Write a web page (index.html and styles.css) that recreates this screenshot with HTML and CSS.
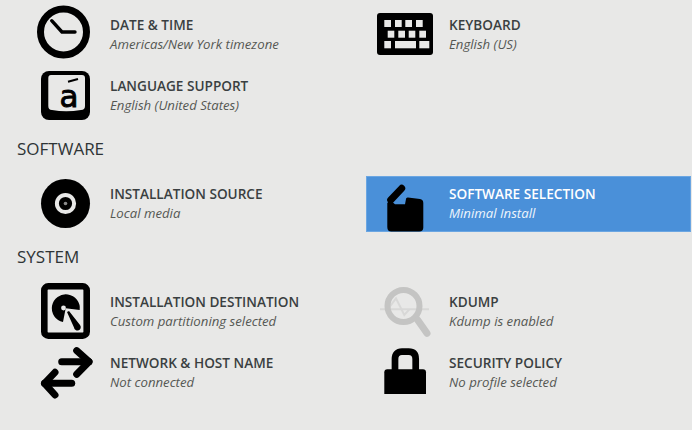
FILE: index.html
```html
<!DOCTYPE html>
<html lang="en">
<head>
    <meta charset="UTF-8">
    <meta name="viewport" content="width=device-width, initial-scale=1.0">
    <title>Installation Summary</title>
    <link rel="stylesheet" href="styles.css">
</head>
<body>
<div class="hub">
    <!-- localization -->
    <div class="spoke-grid">
        <div class="spoke">
            <svg class="spoke-icon" viewBox="0 1 60 60">
                <circle cx="27.5" cy="28" r="23" fill="none" stroke="#000" stroke-width="7"/>
                <path d="M15.7 16.7 26 28H39" fill="none" stroke="#000" stroke-width="3.4" stroke-linecap="round" stroke-linejoin="round"/>
            </svg>
            <div class="spoke-text">
                <div class="spoke-title">DATE &amp; TIME</div>
                <div class="spoke-status">Americas/New York timezone</div>
            </div>
        </div>
        <div class="spoke">
            <svg class="spoke-icon" viewBox="0 1 60 60">
                <rect x="2" y="9" width="56" height="42" rx="3"/>
                <g fill="#e8e8e7">
                    <rect x="9.3" y="16" width="6.7" height="7"/>
                    <rect x="20" y="16" width="6.7" height="7"/>
                    <rect x="30.3" y="16" width="6.7" height="7"/>
                    <rect x="41" y="16" width="6.7" height="7"/>
                    <rect x="12.7" y="26.7" width="6.6" height="7"/>
                    <rect x="23.3" y="26.7" width="6.7" height="7"/>
                    <rect x="33.7" y="26.7" width="6.6" height="7"/>
                    <rect x="44.3" y="26.7" width="6.7" height="7"/>
                    <rect x="9.3" y="37" width="6.7" height="7.3"/>
                    <rect x="20" y="37" width="21" height="7.3"/>
                    <rect x="44.3" y="37" width="10" height="7.3"/>
                </g>
            </svg>
            <div class="spoke-text">
                <div class="spoke-title">KEYBOARD</div>
                <div class="spoke-status">English (US)</div>
            </div>
        </div>
        <div class="spoke">
            <svg class="spoke-icon" viewBox="0 0 60 60">
                <rect x="5" y="5" width="49" height="49" rx="8"/>
                <path d="M15 9H46Q49 9 49 12V40Q49 44 45 44Q30 46.5 16 44Q12.3 44 12.3 40V12Q12.3 9 15 9Z" fill="#e8e8e7"/>
                <path d="M32 15.7 42 13" fill="none" stroke="#000" stroke-width="2.2"/>
                <text class="key-letter" x="23.5" y="41">a</text>
            </svg>
            <div class="spoke-text">
                <div class="spoke-title">LANGUAGE SUPPORT</div>
                <div class="spoke-status">English (United States)</div>
            </div>
        </div>
    </div>

    <h2 class="section-title">SOFTWARE</h2>
    <div class="spoke-grid">
        <div class="spoke">
            <svg class="spoke-icon" viewBox="0 0 60 60">
                <circle cx="29.5" cy="29.5" r="24.5"/>
                <circle cx="29.5" cy="29.5" r="8.6" fill="none" stroke="#e8e8e7" stroke-width="4"/>
                <circle cx="29.5" cy="29.5" r="1.8" fill="#8a8a8a"/>
            </svg>
            <div class="spoke-text">
                <div class="spoke-title">INSTALLATION SOURCE</div>
                <div class="spoke-status">Local media</div>
            </div>
        </div>
        <div class="spoke selected">
            <svg class="spoke-icon" viewBox="0 0 60 60">
                <path d="M15 26 12.3 29V53Q12.3 57.5 16.3 57.5H44.3Q48.3 57.5 48.3 53.5V29Q48.3 25.5 45 25L33 23.5Q31 23.3 31 25L30 30.3H20Z"/>
                <path d="M15.7 26 26.7 14.3" fill="none" stroke="#000" stroke-width="7" stroke-linecap="round"/>
            </svg>
            <div class="spoke-text">
                <div class="spoke-title">SOFTWARE SELECTION</div>
                <div class="spoke-status">Minimal Install</div>
            </div>
        </div>
    </div>

    <h2 class="section-title">SYSTEM</h2>
    <div class="spoke-grid">
        <div class="spoke">
            <svg class="spoke-icon" viewBox="0 0 60 60">
                <rect x="8.3" y="4.3" width="42.4" height="49.4" rx="4" fill="none" stroke="#000" stroke-width="6.6"/>
                <path d="M29.7 26.3 43.7 28A14 14 0 1 0 27 40Z"/>
                <circle cx="27.5" cy="26" r="2.4" fill="#e8e8e7"/>
                <path d="M31 30 33 29 44 43A3.4 3.4 0 1 1 38 45.5Z"/>
            </svg>
            <div class="spoke-text">
                <div class="spoke-title">INSTALLATION DESTINATION</div>
                <div class="spoke-status">Custom partitioning selected</div>
            </div>
        </div>
        <div class="spoke">
            <svg class="spoke-icon" viewBox="0 0 60 60">
                <path d="M5 27.3H54" fill="none" stroke="#d8d8d7" stroke-width="2"/>
                <path d="M12.7 27.3 21 16.3 29.3 33 34.3 27.3" fill="none" stroke="#d8d8d7" stroke-width="2"/>
                <circle cx="28.5" cy="24" r="16" fill="none" stroke="#c4c4c3" stroke-width="6"/>
                <path d="M42.7 38 52 51.3" fill="none" stroke="#c4c4c3" stroke-width="7" stroke-linecap="round"/>
            </svg>
            <div class="spoke-text">
                <div class="spoke-title">KDUMP</div>
                <div class="spoke-status">Kdump is enabled</div>
            </div>
        </div>
        <div class="spoke">
            <svg class="spoke-icon" viewBox="0 0 60 60">
                <g fill="none" stroke="#000" stroke-width="7" stroke-linecap="round" stroke-linejoin="round">
                    <path d="M25.7 18.7H53"/>
                    <path d="M40.7 7.7 53 18.7 40.7 31.3"/>
                    <path d="M35.7 40.3H8.5"/>
                    <path d="M19 29.3 8.5 40.3 19 52"/>
                </g>
            </svg>
            <div class="spoke-text">
                <div class="spoke-title">NETWORK &amp; HOST NAME</div>
                <div class="spoke-status">Not connected</div>
            </div>
        </div>
        <div class="spoke">
            <svg class="spoke-icon" viewBox="0 0 60 60">
                <path d="M20 27V16Q20 8.6 27 8.6H33.7Q40.7 8.6 40.7 16V27" fill="none" stroke="#000" stroke-width="6.7"/>
                <path d="M12.3 26.3H48Q51 26.3 51 29.3V51H9.3V29.3Q9.3 26.3 12.3 26.3Z"/>
            </svg>
            <div class="spoke-text">
                <div class="spoke-title">SECURITY POLICY</div>
                <div class="spoke-status">No profile selected</div>
            </div>
        </div>
    </div>
</div>
</body>
</html>
```

FILE: styles.css
```css
* { margin: 0; padding: 0; box-sizing: border-box; }
body {
    font-family: "Open Sans", "Liberation Sans", sans-serif;
    background: #e8e8e7;
    color: #2e3436;
    overflow: hidden;
}
.hub { padding-top: 7px; }
.section-title {
    height: 52px;
    padding: 0 0 4px 17px;
    display: flex;
    align-items: center;
    font-size: 17px;
    font-weight: 400;
}
.spoke-grid {
    margin-left: 27px;
    display: grid;
    grid-template-columns: 339px 325px;
    row-gap: 5px;
}
.spoke {
    height: 56px;
    padding-left: 9px;
    display: flex;
    align-items: center;
    gap: 14px;
}
.spoke-icon { width: 60px; height: 60px; flex: none; }
.spoke-title { font-size: 13.6px; font-weight: 600; line-height: 18px; color: #3a3f41; }
.spoke-status { font-size: 13.2px; font-style: italic; line-height: 20px; color: #555753; }
.selected { background: #4a90d9; box-shadow: inset 0 0 0 1px #6ba6e2; }
.selected .spoke-title { color: #fff; }
.selected .spoke-status { color: #eef5fc; }
.key-letter { font-family: "DejaVu Sans", sans-serif; font-size: 31px; stroke: #000; stroke-width: 0.9px; }
```
